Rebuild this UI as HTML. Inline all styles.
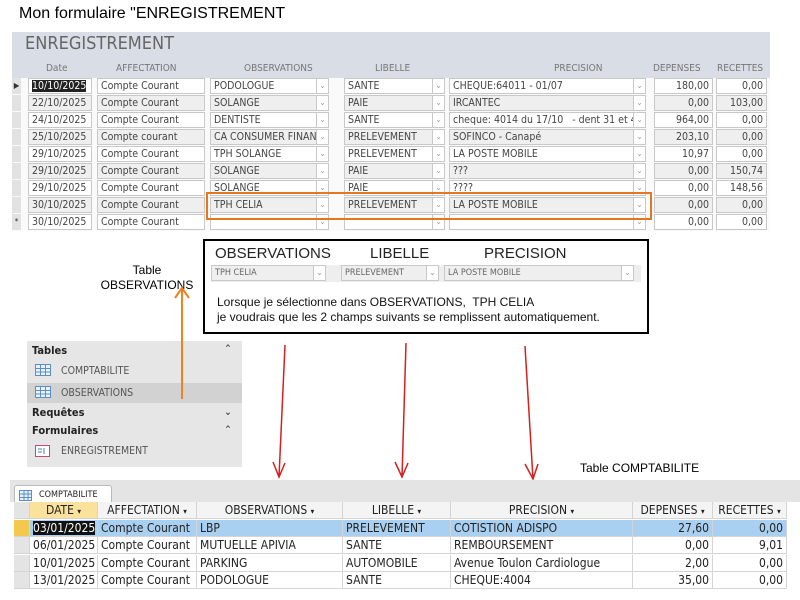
<!DOCTYPE html><html><head><meta charset="utf-8"><style>
*{margin:0;padding:0;box-sizing:border-box}
body{width:800px;height:600px;background:#fff;position:relative;overflow:hidden;font-family:"Liberation Sans",Arial,sans-serif}
.a{position:absolute;white-space:nowrap}
.f{font-family:"DejaVu Sans Condensed","Liberation Sans Narrow","Liberation Sans",sans-serif;font-size:10.5px;color:#444}
.bx{position:absolute;height:16px;border:1px solid #c8c8c8;background:#fff;line-height:14px;padding:0 3px;overflow:hidden;white-space:nowrap}
.g{background:#efefef}
.dd{position:absolute;width:13px;height:16px;border:1px solid #c8c8c8;background:#fff;color:#999;font-size:8px;text-align:center;line-height:14px}
.r{text-align:right}
.hd{font-size:10px;color:#777;position:absolute;top:63px}
.n{font-family:"Liberation Sans Narrow","DejaVu Sans Condensed","Liberation Sans",sans-serif;font-size:12px;color:#222}
.c{position:absolute;height:17px;line-height:17px;padding:0 3px;border-right:1px solid #d4d4d4;border-bottom:1px solid #d4d4d4;overflow:hidden}
</style></head><body>
<div class="a" style="left:19px;top:5px;font-size:16px;color:#000">Mon formulaire "ENREGISTREMENT</div>
<div class="a" style="left:12px;top:32px;width:758px;height:46px;background:#d8dde6"></div>
<div class="a" style="left:12px;top:78px;width:758px;height:153px;background:#fafafa"></div>
<div class="a f" style="left:25px;top:33px;font-size:18px;color:#666">ENREGISTREMENT</div>
<div class="hd f" style="left:46px">Date</div>
<div class="hd f" style="left:116px">AFFECTATION</div>
<div class="hd f" style="left:244px">OBSERVATIONS</div>
<div class="hd f" style="left:375px">LIBELLE</div>
<div class="hd f" style="left:554px">PRECISION</div>
<div class="hd f" style="left:653px">DEPENSES</div>
<div class="hd f" style="left:717px">RECETTES</div>
<div id="rows" class="f"></div>
<div class="a" style="left:206px;top:192px;width:446px;height:28px;border:2px solid #e8761e"></div>

<div class="a" style="left:203px;top:239px;width:446px;height:95px;border:2px solid #000"></div>
<div class="a" style="left:215px;top:245px;font-size:15px;color:#222">OBSERVATIONS</div>
<div class="a" style="left:370px;top:245px;font-size:15px;color:#222">LIBELLE</div>
<div class="a" style="left:484px;top:245px;font-size:15px;color:#222">PRECISION</div>
<div class="a" style="left:211px;top:265px;width:430px;height:17px;background:#eee"></div>
<div class="bx f g" style="left:211px;top:265px;width:103px;font-size:9px;color:#666">TPH CELIA</div><div class="dd" style="left:313px;top:265px">&#8964;</div>
<div class="bx f g" style="left:341px;top:265px;width:86px;font-size:9px;color:#666">PRELEVEMENT</div><div class="dd" style="left:426px;top:265px">&#8964;</div>
<div class="bx f g" style="left:444px;top:265px;width:178px;font-size:9px;color:#666">LA POSTE MOBILE</div><div class="dd" style="left:621px;top:265px">&#8964;</div>
<div class="a" style="left:217px;top:295px;font-size:12px;color:#111;line-height:15px">Lorsque je sélectionne dans OBSERVATIONS,&nbsp; TPH CELIA<br>je voudrais que les 2 champs suivants se remplissent automatiquement.</div>

<div class="a" style="left:96px;top:263px;width:102px;text-align:center;font-size:12px;line-height:15px;color:#000">Table<br>OBSERVATIONS</div>

<div class="a" style="left:27px;top:341px;width:215px;height:126px;background:#e6e6e6"></div>
<div class="a" style="left:27px;top:383px;width:215px;height:20px;background:#d2d2d2"></div>
<div class="a f" style="left:32px;top:344px;font-weight:bold;color:#222;font-size:11px">Tables</div>
<div class="a f" style="left:224px;top:343px;color:#333">&#8963;</div>
<div class="a f" style="left:61px;top:365px;color:#555;font-size:10.5px">COMPTABILITE</div>
<div class="a f" style="left:61px;top:387px;color:#555;font-size:10.5px">OBSERVATIONS</div>
<div class="a f" style="left:32px;top:406px;font-weight:bold;color:#222;font-size:11px">Requêtes</div>
<div class="a f" style="left:224px;top:406px;color:#333">&#8964;</div>
<div class="a f" style="left:32px;top:424px;font-weight:bold;color:#222;font-size:11px">Formulaires</div>
<div class="a f" style="left:224px;top:424px;color:#333">&#8963;</div>
<div class="a f" style="left:61px;top:445px;color:#555;font-size:10.5px">ENREGISTREMENT</div>
<svg class="a" style="left:0;top:0" width="800" height="600">
<g fill="#eaf2fb" stroke="#5a8fc8" stroke-width="1"><rect x="35.5" y="364.5" width="15" height="11"/><rect x="35.5" y="386.5" width="15" height="11"/></g>
<g stroke="#5a8fc8" stroke-width="1"><path d="M36 368.5h14M36 372h14M40.5 365v10M45.5 365v10M36 390.5h14M36 394h14M40.5 387v10M45.5 387v10"/></g>
<rect x="35.5" y="445.5" width="14" height="11" fill="#fff" stroke="#c3487e"/><path d="M38 449h4M38 452h4M44 448v6" stroke="#4a7cc0"/>
<g stroke="#f08020" stroke-width="2" fill="none"><path d="M182 399V288M175 298l7-10 7 10"/></g>
<g stroke="#d42020" stroke-width="1.5" fill="none"><path d="M285 345L279 477M273 462l6 15 6-14"/><path d="M406 343L402 477M395 462l7 15 6-14"/><path d="M525 346L533 479M525 464l8 15 5-15"/></g>
<rect x="19.5" y="490.5" width="12" height="10" fill="#eaf2fb" stroke="#5a8fc8"/><path d="M20 494h11M20 497.5h11M24 491v9M28 491v9" stroke="#5a8fc8"/>
</svg>
<div class="a" style="left:580px;top:461px;font-size:12px;color:#000">Table COMPTABILITE</div>
<div class="a" style="left:10px;top:480px;width:790px;height:22px;background:#e4e4e4"></div>
<div class="a" style="left:14px;top:485px;width:98px;height:18px;background:#fff;border:1px solid #bbb;border-bottom:none;border-radius:3px 3px 0 0"></div>
<svg class="a" style="left:0;top:0" width="40" height="510"><rect x="19.5" y="490.5" width="12" height="10" fill="#eaf2fb" stroke="#5a8fc8"/><path d="M20 494h11M20 497.5h11M24 491v9M28 491v9" stroke="#5a8fc8"/></svg>
<div class="a f" style="left:39px;top:490px;font-size:9px;color:#222">COMPTABILITE</div>
<div id="bt" class="n"></div>
<script>
var R=[["10/10/2025","Compte Courant","PODOLOGUE","SANTE","CHEQUE:64011 - 01/07","180,00","0,00"],["22/10/2025","Compte Courant","SOLANGE","PAIE","IRCANTEC","0,00","103,00"],["24/10/2025","Compte Courant","DENTISTE","SANTE","cheque: 4014 du 17/10&nbsp;&nbsp; - dent 31 et 4","964,00","0,00"],["25/10/2025","Compte courant","CA CONSUMER FINAN","PRELEVEMENT","SOFINCO - Canapé","203,10","0,00"],["29/10/2025","Compte Courant","TPH SOLANGE","PRELEVEMENT","LA POSTE MOBILE","10,97","0,00"],["29/10/2025","Compte Courant","SOLANGE","PAIE","???","0,00","150,74"],["29/10/2025","Compte Courant","SOLANGE","PAIE","????","0,00","148,56"],["30/10/2025","Compte Courant","TPH CELIA","PRELEVEMENT","LA POSTE MOBILE","0,00","0,00"],["30/10/2025","Compte Courant","","","","0,00","0,00"]];
var h="";R.forEach(function(r,i){var y=78+i*17,g=(i%2)?" g":"";
h+='<div class="a" style="left:12px;top:'+y+'px;width:9px;height:16px;background:#e2e2e2;font-size:8px;color:#333;text-align:center;line-height:16px">'+(i==0?"&#9654;":i==8?"*":"")+'</div>';
h+='<div class="bx'+g+'" style="left:28px;top:'+y+'px;width:64px">'+(i==0?'<span style="background:#222;color:#fff">'+r[0]+'</span>':r[0])+'</div>';
h+='<div class="bx'+g+'" style="left:97px;top:'+y+'px;width:108px">'+r[1]+'</div>';
h+='<div class="bx'+g+'" style="left:210px;top:'+y+'px;width:107px">'+r[2]+'</div><div class="dd" style="left:316px;top:'+y+'px">&#8964;</div>';
h+='<div class="bx'+g+'" style="left:344px;top:'+y+'px;width:89px">'+r[3]+'</div><div class="dd" style="left:432px;top:'+y+'px">&#8964;</div>';
h+='<div class="bx'+g+'" style="left:449px;top:'+y+'px;width:185px">'+r[4]+'</div><div class="dd" style="left:633px;top:'+y+'px">&#8964;</div>';
h+='<div class="bx r'+g+'" style="left:654px;top:'+y+'px;width:59px">'+r[5]+'</div>';
h+='<div class="bx r'+g+'" style="left:716px;top:'+y+'px;width:51px">'+r[6]+'</div>';});
document.getElementById("rows").innerHTML=h;
var C=[[14,16],[30,68],[98,99],[197,146],[343,108],[451,182],[633,80],[713,74]];
var H=["","DATE","AFFECTATION","OBSERVATIONS","LIBELLE","PRECISION","DEPENSES","RECETTES"];
var B=[["03/01/2025","Compte Courant","LBP","PRELEVEMENT","COTISTION ADISPO","27,60","0,00"],["06/01/2025","Compte Courant","MUTUELLE APIVIA","SANTE","REMBOURSEMENT","0,00","9,01"],["10/01/2025","Compte Courant","PARKING","AUTOMOBILE","Avenue Toulon Cardiologue","2,00","0,00"],["13/01/2025","Compte Courant","PODOLOGUE","SANTE","CHEQUE:4004","35,00","0,00"]];
var s="";C.forEach(function(c,j){s+='<div class="c" style="left:'+c[0]+'px;top:502px;width:'+c[1]+'px;text-align:center;background:'+(j==1?'#fbe29c':j==0?'#e4e4e4':'#f4f4f4')+'">'+H[j]+(j?' <span style="font-size:8px">&#9662;</span>':'')+'</div>';});
B.forEach(function(r,i){var y=520+i*17.3;C.forEach(function(c,j){var bg=i==0?(j==0?'#f2c94c':'#a9d0f0'):(j==0?'#e4e4e4':'#fff');var t=j==0?'':r[j-1];if(i==0&&j==1)t='<span style="background:#111;color:#fff">'+t+'</span>';
s+='<div class="c" style="left:'+c[0]+'px;top:'+y+'px;width:'+c[1]+'px;background:'+bg+';text-align:'+(j>=6?'right':'left')+'">'+t+'</div>';});});
document.getElementById("bt").innerHTML=s;
</script>
</body></html>
